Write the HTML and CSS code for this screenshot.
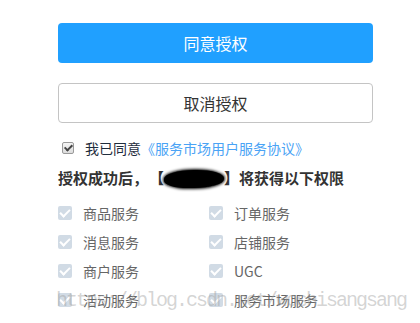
FILE: index.html
```html
<!DOCTYPE html>
<html lang="zh-CN">

<head>
    <meta charset="UTF-8">
    <meta name="viewport" content="width=device-width, initial-scale=1.0">
    <title>授权</title>
    <link rel="stylesheet" href="styles.css">
</head>

<body>
    <div class="auth">
        <button type="button" class="btn btn-primary">同意授权</button>
        <button type="button" class="btn btn-default">取消授权</button>

        <div class="agree">
            <span class="agree-box"></span>
            <span>我已同意</span>
            <a class="agree-link" href="#">《服务市场用户服务协议》</a>
        </div>

        <h2 class="title">授权成功后，<span class="gap"></span>【<span class="blot"></span>】将获得以下权限</h2>

        <div class="perms">
            <div class="perm"><span class="check"></span>商品服务</div>
            <div class="perm"><span class="check"></span>订单服务</div>
            <div class="perm"><span class="check"></span>消息服务</div>
            <div class="perm"><span class="check"></span>店铺服务</div>
            <div class="perm"><span class="check"></span>商户服务</div>
            <div class="perm"><span class="check"></span>UGC</div>
            <div class="perm"><span class="check"></span>活动服务</div>
            <div class="perm"><span class="check"></span>服务市场服务</div>
        </div>
    </div>

    <div class="watermark">https://blog.csdn.net/woshisangsang</div>
</body>

</html>
```

FILE: styles.css
```css
body {
    margin: 0;
    background-color: #ffffff;
    font-family: "Noto Sans CJK SC", "Noto Sans", sans-serif;
    overflow: hidden;
}

.auth {
    width: 315px;
    margin: 23px 0 0 58px;
}

.btn {
    display: block;
    width: 100%;
    height: 40px;
    border-radius: 4px;
    font-family: inherit;
    font-size: 16px;
    cursor: pointer;
    box-sizing: border-box;
}

.btn-primary {
    background-color: #20a0ff;
    color: #ffffff;
    border: none;
}

.btn-default {
    margin-top: 20px;
    background-color: #ffffff;
    color: #333333;
    border: 1px solid #c4c4c4;
}

.agree {
    display: flex;
    align-items: center;
    margin-top: 15px;
    height: 20px;
    font-size: 14px;
    color: #1f2d3d;
}

.agree-box {
    position: relative;
    width: 10px;
    height: 10px;
    margin: 0 11px 0 4px;
    border: 1px solid #9a9a9a;
    border-radius: 2px;
    background: linear-gradient(#f4f4f4, #dcdcdc);
}

.agree-box::after {
    content: "";
    position: absolute;
    left: 3px;
    top: 0;
    width: 3px;
    height: 6px;
    border: solid #444;
    border-width: 0 2px 2px 0;
    transform: rotate(45deg);
}

.agree-link {
    color: #4aa3f5;
    text-decoration: none;
}

.title {
    margin: 9px 0 0;
    font-size: 15px;
    line-height: 22px;
    font-weight: bold;
    color: #333333;
}

.gap {
    display: inline-block;
    width: 1px;
}

.blot {
    display: inline-block;
    width: 60px;
    height: 18px;
    vertical-align: -4px;
    background: #000000;
    border-radius: 50% 45% 50% 40%;
    box-shadow: 0 0 3px 1px #000000;
}

.perms {
    display: grid;
    grid-template-columns: 151px 1fr;
    grid-auto-rows: 29px;
    margin-top: 9px;
}

.perm {
    display: flex;
    align-items: center;
    gap: 11px;
    font-size: 14px;
    color: #666666;
}

.check {
    position: relative;
    width: 14px;
    height: 14px;
    border-radius: 2px;
    background-color: #d1dbe5;
}

.check::after {
    content: "";
    position: absolute;
    left: 4px;
    top: 1px;
    width: 4px;
    height: 8px;
    border: solid #ffffff;
    border-width: 0 2px 2px 0;
    transform: rotate(45deg);
}

.watermark {
    position: absolute;
    left: 56px;
    top: 289px;
    font-family: "Liberation Mono", monospace;
    font-size: 20px;
    letter-spacing: -2px;
    color: rgba(160, 160, 160, 0.45);
    pointer-events: none;
}
```
